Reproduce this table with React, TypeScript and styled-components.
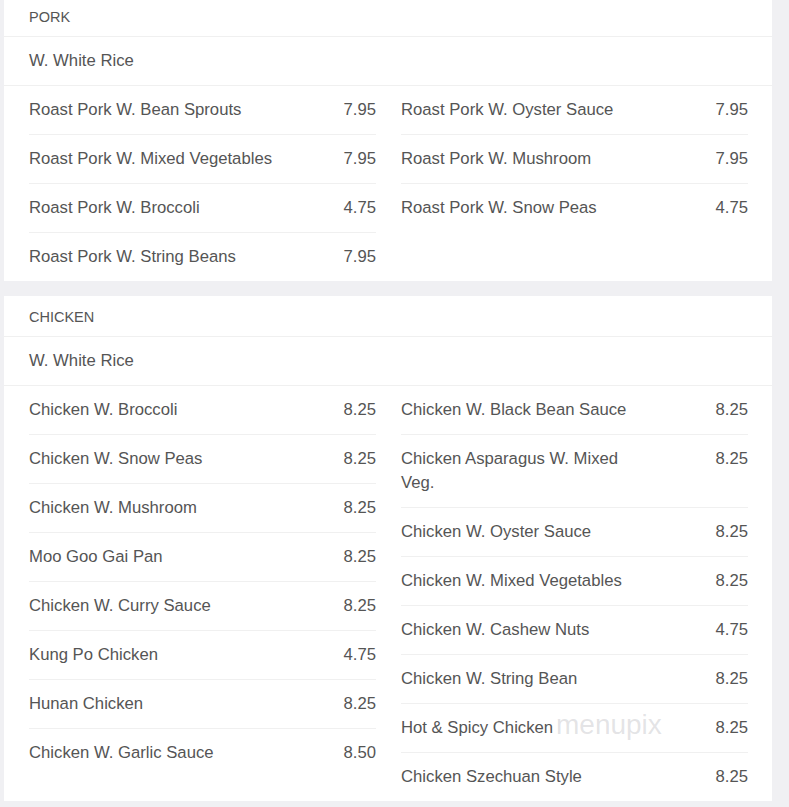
import React from "react";
import styled, { createGlobalStyle } from "styled-components";

const Global = createGlobalStyle`
  html, body { margin: 0; padding: 0; background: #f0f0f3; }
  body { font-family: "Liberation Sans", Arial, sans-serif; color: #555; overflow: hidden; }
`;

const Page = styled.div`
  display: flex;
  flex-direction: column;
  gap: 15px;
  padding: 0 17px 0 4px;
  margin-top: -4px;
`;

const Card = styled.section`
  background: #fff;
  position: relative;
`;

const Header = styled.div`
  padding: 13px 25px 10px;
  font-size: 14.5px;
  line-height: 17px;
  text-transform: uppercase;
  color: #555;
  border-bottom: 1px solid #f0f0f0;
`;

const SubHeader = styled.div`
  padding: 12px 25px;
  font-size: 16.7px;
  line-height: 24px;
  color: #555;
  border-bottom: 1px solid #f0f0f0;
`;

const Columns = styled.div`
  display: grid;
  grid-template-columns: 1fr 1fr;
  column-gap: 25px;
  padding: 0 24px 0 25px;
`;

const Column = styled.div`
  display: flex;
  flex-direction: column;
`;

const Item = styled.div`
  display: flex;
  justify-content: space-between;
  align-items: flex-start;
  padding: 12px 0;
  font-size: 16.7px;
  line-height: 24px;
  color: #555;
  & + & { border-top: 1px solid #f0f0f0; }
`;

const Name = styled.span`
  max-width: 250px;
`;

const Price = styled.span`
  color: #555;
`;

const Watermark = styled.div`
  position: absolute;
  left: 552px;
  top: 415px;
  font-family: "Liberation Sans", sans-serif;
  font-size: 28px;
  line-height: 28px;
  color: rgba(170, 170, 175, 0.32);
  pointer-events: none;
`;

type Entry = [string, string];

const pork: Entry[][] = [
  [
    ["Roast Pork W. Bean Sprouts", "7.95"],
    ["Roast Pork W. Mixed Vegetables", "7.95"],
    ["Roast Pork W. Broccoli", "4.75"],
    ["Roast Pork W. String Beans", "7.95"],
  ],
  [
    ["Roast Pork W. Oyster Sauce", "7.95"],
    ["Roast Pork W. Mushroom", "7.95"],
    ["Roast Pork W. Snow Peas", "4.75"],
  ],
];

const chicken: Entry[][] = [
  [
    ["Chicken W. Broccoli", "8.25"],
    ["Chicken W. Snow Peas", "8.25"],
    ["Chicken W. Mushroom", "8.25"],
    ["Moo Goo Gai Pan", "8.25"],
    ["Chicken W. Curry Sauce", "8.25"],
    ["Kung Po Chicken", "4.75"],
    ["Hunan Chicken", "8.25"],
    ["Chicken W. Garlic Sauce", "8.50"],
  ],
  [
    ["Chicken W. Black Bean Sauce", "8.25"],
    ["Chicken Asparagus W. Mixed Veg.", "8.25"],
    ["Chicken W. Oyster Sauce", "8.25"],
    ["Chicken W. Mixed Vegetables", "8.25"],
    ["Chicken W. Cashew Nuts", "4.75"],
    ["Chicken W. String Bean", "8.25"],
    ["Hot & Spicy Chicken", "8.25"],
    ["Chicken Szechuan Style", "8.25"],
  ],
];

const Section = ({ title, cols, mark }: { title: string; cols: Entry[][]; mark?: boolean }) => (
  <Card>
    <Header>{title}</Header>
    <SubHeader>W. White Rice</SubHeader>
    <Columns>
      {cols.map((col, i) => (
        <Column key={i}>
          {col.map(([n, p]) => (
            <Item key={n}>
              <Name>{n}</Name>
              <Price>{p}</Price>
            </Item>
          ))}
        </Column>
      ))}
    </Columns>
    {mark && <Watermark>menupix</Watermark>}
  </Card>
);

export default function App() {
  return (
    <>
      <Global />
      <Page>
        <Section title="Pork" cols={pork} />
        <Section title="Chicken" cols={chicken} mark />
      </Page>
    </>
  );
}
